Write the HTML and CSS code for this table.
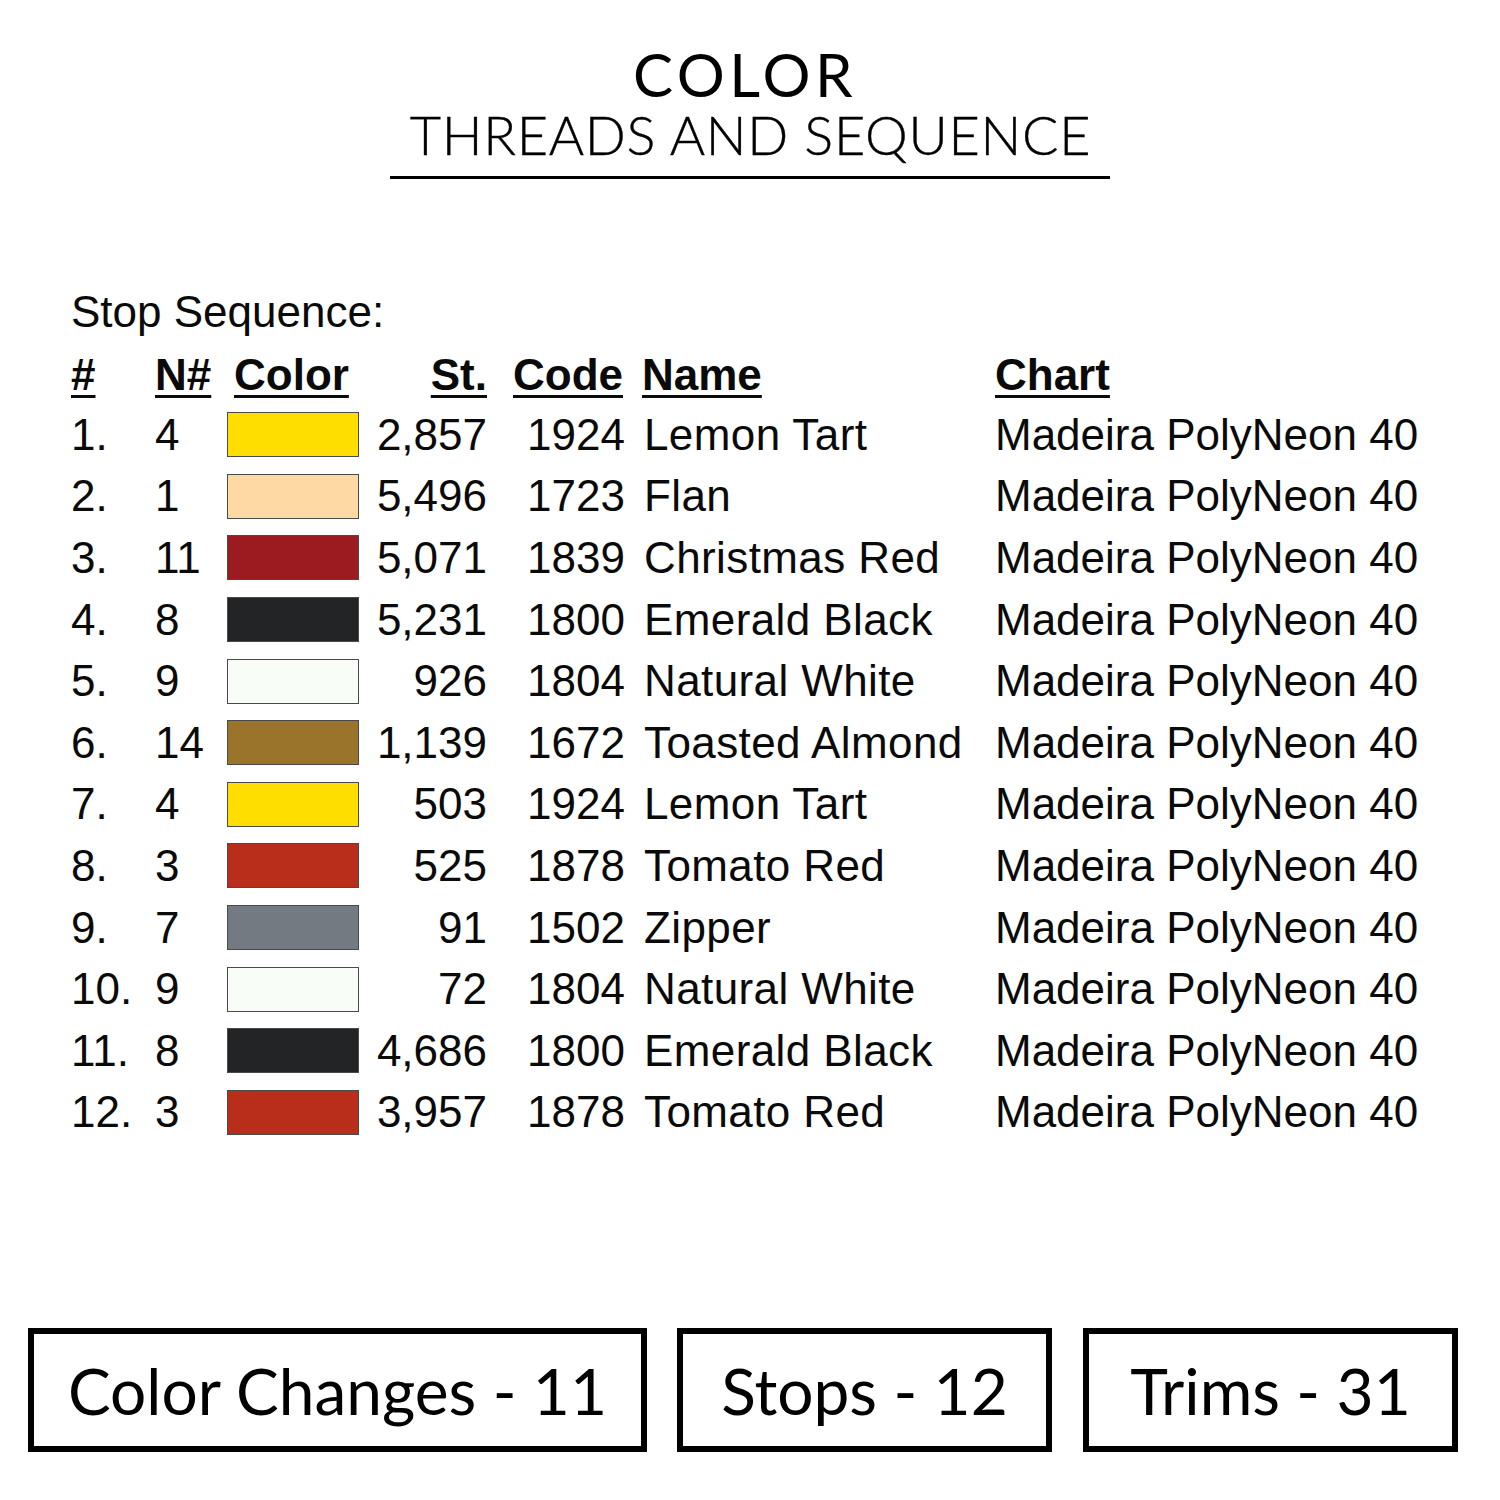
FILE: index.html
```html
<!DOCTYPE html>
<html lang="en">
<head>
<meta charset="utf-8">
<title>Color Threads and Sequence</title>
<link rel="stylesheet" href="styles.css">
</head>
<body>
<div class="page">
  <header class="title">
    <h1 class="title-main">COLOR</h1>
    <h2 class="title-sub">THREADS AND SEQUENCE</h2>
  </header>

  <section class="sequence">
    <p class="seq-label">Stop Sequence:</p>
    <div class="seq-table">
      <div class="th c-num"><u>#</u></div>
      <div class="th c-n"><u>N#</u></div>
      <div class="th c-color"><u>Color</u></div>
      <div class="th c-st"><u>St.</u></div>
      <div class="th c-code"><u>Code</u></div>
      <div class="th c-name"><u>Name</u></div>
      <div class="th c-chart"><u>Chart</u></div>

      <div class="td c-num">1.</div><div class="td c-n">4</div><div class="td c-color"><span class="swatch sw-lemon"></span></div><div class="td c-st">2,857</div><div class="td c-code">1924</div><div class="td c-name">Lemon Tart</div><div class="td c-chart">Madeira PolyNeon 40</div>
      <div class="td c-num">2.</div><div class="td c-n">1</div><div class="td c-color"><span class="swatch sw-flan"></span></div><div class="td c-st">5,496</div><div class="td c-code">1723</div><div class="td c-name">Flan</div><div class="td c-chart">Madeira PolyNeon 40</div>
      <div class="td c-num">3.</div><div class="td c-n">11</div><div class="td c-color"><span class="swatch sw-xmas"></span></div><div class="td c-st">5,071</div><div class="td c-code">1839</div><div class="td c-name">Christmas Red</div><div class="td c-chart">Madeira PolyNeon 40</div>
      <div class="td c-num">4.</div><div class="td c-n">8</div><div class="td c-color"><span class="swatch sw-black"></span></div><div class="td c-st">5,231</div><div class="td c-code">1800</div><div class="td c-name">Emerald Black</div><div class="td c-chart">Madeira PolyNeon 40</div>
      <div class="td c-num">5.</div><div class="td c-n">9</div><div class="td c-color"><span class="swatch sw-white"></span></div><div class="td c-st">926</div><div class="td c-code">1804</div><div class="td c-name">Natural White</div><div class="td c-chart">Madeira PolyNeon 40</div>
      <div class="td c-num">6.</div><div class="td c-n">14</div><div class="td c-color"><span class="swatch sw-almond"></span></div><div class="td c-st">1,139</div><div class="td c-code">1672</div><div class="td c-name">Toasted Almond</div><div class="td c-chart">Madeira PolyNeon 40</div>
      <div class="td c-num">7.</div><div class="td c-n">4</div><div class="td c-color"><span class="swatch sw-lemon"></span></div><div class="td c-st">503</div><div class="td c-code">1924</div><div class="td c-name">Lemon Tart</div><div class="td c-chart">Madeira PolyNeon 40</div>
      <div class="td c-num">8.</div><div class="td c-n">3</div><div class="td c-color"><span class="swatch sw-tomato"></span></div><div class="td c-st">525</div><div class="td c-code">1878</div><div class="td c-name">Tomato Red</div><div class="td c-chart">Madeira PolyNeon 40</div>
      <div class="td c-num">9.</div><div class="td c-n">7</div><div class="td c-color"><span class="swatch sw-zipper"></span></div><div class="td c-st">91</div><div class="td c-code">1502</div><div class="td c-name">Zipper</div><div class="td c-chart">Madeira PolyNeon 40</div>
      <div class="td c-num">10.</div><div class="td c-n">9</div><div class="td c-color"><span class="swatch sw-white"></span></div><div class="td c-st">72</div><div class="td c-code">1804</div><div class="td c-name">Natural White</div><div class="td c-chart">Madeira PolyNeon 40</div>
      <div class="td c-num">11.</div><div class="td c-n">8</div><div class="td c-color"><span class="swatch sw-black"></span></div><div class="td c-st">4,686</div><div class="td c-code">1800</div><div class="td c-name">Emerald Black</div><div class="td c-chart">Madeira PolyNeon 40</div>
      <div class="td c-num">12.</div><div class="td c-n">3</div><div class="td c-color"><span class="swatch sw-tomato"></span></div><div class="td c-st">3,957</div><div class="td c-code">1878</div><div class="td c-name">Tomato Red</div><div class="td c-chart">Madeira PolyNeon 40</div>
    </div>
  </section>

  <footer class="stats">
    <div class="stat stat-wide">Color Changes - 11</div>
    <div class="stat">Stops - 12</div>
    <div class="stat">Trims - 31</div>
  </footer>
</div>
</body>
</html>
```

FILE: styles.css
```css
html, body {
  margin: 0;
  padding: 0;
  background: #ffffff;
}

.page {
  width: 1500px;
  height: 1500px;
  box-sizing: border-box;
  padding-top: 44px;
  color: #000;
}

/* ---------- title ---------- */
.title {
  display: flex;
  flex-direction: column;
  align-items: center;
}

.title-main {
  margin: 0;
  padding-right: 10px;
  font-family: "Lato", "Open Sans", sans-serif;
  font-weight: 400;
  font-size: 60px;
  line-height: 60px;
  letter-spacing: 4.5px;
}

.title-sub {
  margin: 4px 0 0;
  padding: 0 19px 14px 20px;
  border-bottom: 3px solid #000;
  font-family: "Lato", "Open Sans", sans-serif;
  font-weight: 300;
  font-size: 54px;
  line-height: 54px;
  letter-spacing: 0.7px;
  -webkit-text-stroke: 0.4px #000;
}

/* ---------- sequence table ---------- */
.sequence {
  margin-top: 108px;
  padding-left: 71px;
  font-family: "Liberation Sans", Arial, sans-serif;
  font-size: 44px;
  color: #0a0a0a;
}

.seq-label {
  margin: 0;
  line-height: 50px;
}

.seq-table {
  margin-top: 8px;
  display: grid;
  grid-template-columns: 84px 72px 132px 128px 155px 353px auto;
  grid-template-rows: 59px repeat(12, 61.6px);
  align-items: center;
}

.th, .td {
  line-height: 50px;
  white-space: nowrap;
}

.th {
  font-weight: 700;
}

.th u {
  text-decoration-thickness: 3px;
  text-underline-offset: 5px;
}

.c-color.th {
  padding-left: 7px;
}

.c-st {
  text-align: right;
}

.th.c-code {
  padding-left: 26px;
}

.td.c-code {
  text-align: right;
  padding-right: 17px;
}

.td.c-name {
  padding-left: 2px;
  letter-spacing: 0.4px;
}

.c-color.td {
  display: flex;
  align-items: center;
}

.swatch {
  display: block;
  width: 132px;
  height: 45px;
  box-sizing: border-box;
  border: 1px solid #4a4a4a;
}

.sw-lemon  { background: #fedd00; }
.sw-flan   { background: #fed9a3; }
.sw-xmas   { background: #9b1b20; }
.sw-black  { background: #222426; }
.sw-white  { background: #f8fdf8; }
.sw-almond { background: #9a742a; }
.sw-tomato { background: #b82e1a; }
.sw-zipper { background: #747a81; }

/* ---------- stats ---------- */
.stats {
  margin-top: 185px;
  padding-left: 28px;
  display: flex;
  gap: 30px;
}

.stat {
  width: 375px;
  height: 124px;
  box-sizing: border-box;
  border: 6px solid #000;
  display: flex;
  align-items: center;
  justify-content: center;
  font-family: "Lato", "Open Sans", sans-serif;
  font-size: 64px;
  font-weight: 400;
}

.stat + .stat + .stat {
  margin-left: 1px;
}

.stat-wide {
  width: 619px;
}
```
